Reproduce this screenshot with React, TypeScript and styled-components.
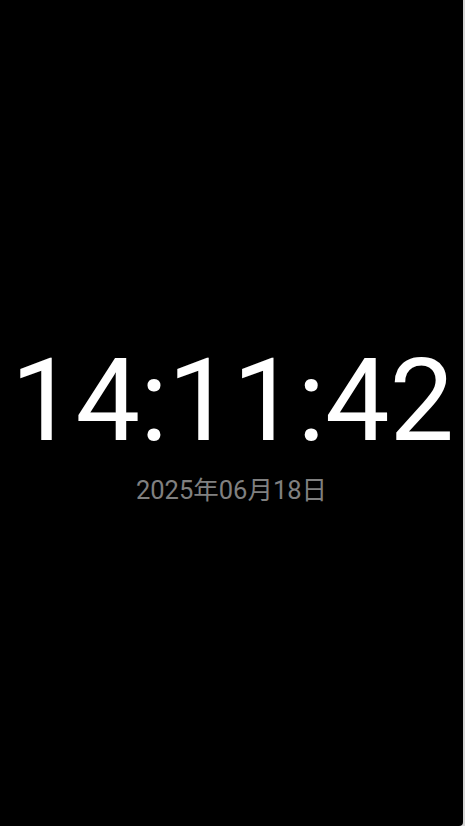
import React from 'react';
import styled, { createGlobalStyle } from 'styled-components';

const GlobalStyle = createGlobalStyle`
  html,
  body {
    margin: 0;
    padding: 0;
    height: 100%;
    background: #d6d6d6;
  }
  #root {
    height: 100%;
  }
`;

const Screen = styled.div`
  display: flex;
  flex-direction: column;
  align-items: center;
  justify-content: center;
  height: 100vh;
  margin-right: 2px;
  padding-top: 20px;
  box-sizing: border-box;
  background: #000;
  border-bottom-right-radius: 4px;
  font-family: Roboto, 'Noto Sans CJK SC', sans-serif;
`;

const TimeText = styled.div`
  color: #fff;
  font-size: 115px;
  font-weight: 400;
  line-height: 1;
  white-space: nowrap;
  padding-left: 2px;
`;

const DateText = styled.div`
  color: #808080;
  font-size: 25.5px;
  font-weight: 400;
  line-height: 1;
  margin-top: 20px;
`;

const App: React.FC = () => {
  return (
    <>
      <GlobalStyle />
      <Screen>
        <TimeText>14:11:42</TimeText>
        <DateText>2025年06月18日</DateText>
      </Screen>
    </>
  );
};

export default App;
